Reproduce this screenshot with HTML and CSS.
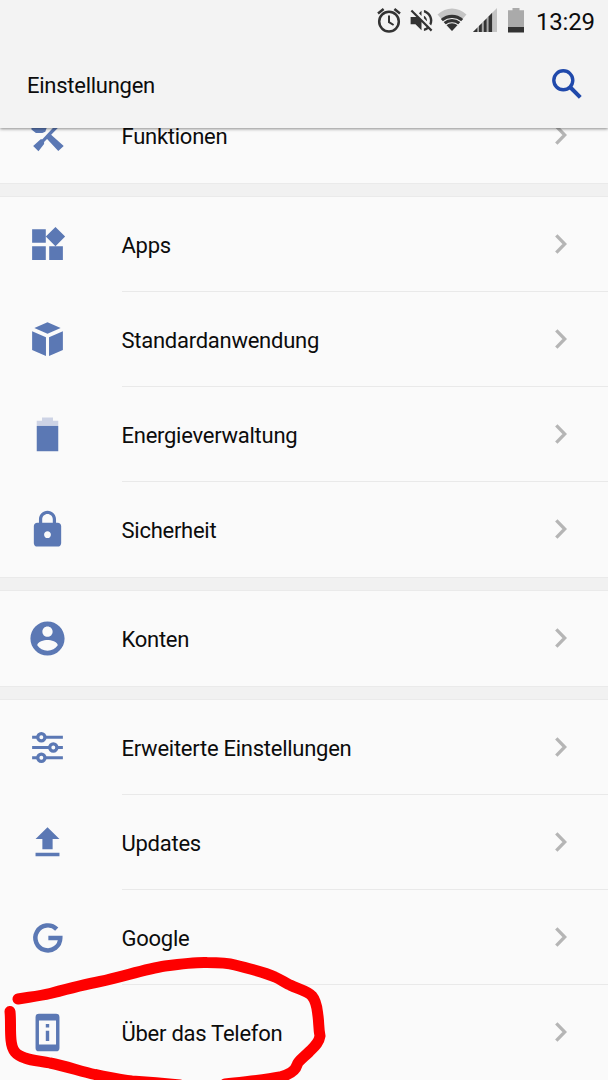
FILE: index.html
```html
<!DOCTYPE html>
<html lang="de">
<head>
    <meta charset="UTF-8">
    <title>Einstellungen</title>
    <link rel="stylesheet" href="styles.css">
</head>
<body>
    <div class="screen">
        <header class="header">
            <div class="status-bar">
                <svg class="alarm" width="24" height="26" viewBox="0 0 24 26">
                    <g fill="none" stroke="#333" stroke-width="2.5">
                        <circle cx="12" cy="13.6" r="9.8"/>
                        <path d="M1 5.400 6.600 1M17.400 1 23 5.400"/>
                        <path d="M12 7.600v6.600l4.600 2.800" stroke-width="2"/>
                    </g>
                </svg>
                <svg class="mute" width="29" height="29" viewBox="0 0 24 24">
                    <path fill="#333" d="M16.5 12c0-1.77-1.02-3.29-2.5-4.03v2.21l2.45 2.45c.03-.2.05-.41.05-.63zm2.5 0c0 .94-.2 1.82-.54 2.64l1.51 1.51C20.63 14.91 21 13.5 21 12c0-4.28-2.99-7.86-7-8.77v2.06c2.89.86 5 3.54 5 6.71zM4.27 3 3 4.27 7.73 9H3v6h4l5 5v-6.73l4.25 4.25c-.67.52-1.42.93-2.25 1.18v2.06c1.38-.31 2.63-.95 3.69-1.81L19.73 21 21 19.73l-9-9L4.27 3zM12 4 9.91 6.09 12 8.18V4z"/>
                </svg>
                <svg class="wifi" width="30" height="23" viewBox="0 0 30 23">
                    <path fill="#c4c4c4" d="M.5 6.600C9-1.400 21-1.400 29.500 6.600L15 23z"/>
                    <path fill="#333" d="M3.800 11C10 5.200 20 5.200 26.200 11L15 23z"/>
                    <path fill="none" stroke="#f3f3f3" stroke-width="1.100" d="M6 13.700c5.500-4.300 12.500-4.300 18 0M8.500 17.100c4-2.900 9-2.900 13 0"/>
                </svg>
                <svg class="signal" width="24" height="24" viewBox="0 0 24 24">
                    <path fill="#c4c4c4" d="M0 24 24 0v24z"/>
                    <path fill="#aaa" d="M0 24 19.500 4.500V24z"/>
                    <path fill="#333" d="M0 24l4.300-4.300V24zM6 18l2.800-2.800V24H6zM10.800 13.200l2.800-2.800V24h-2.800zM15.600 8.400l3.400-3.400V24h-3.400z"/>
                </svg>
                <svg class="battery" width="16" height="25" viewBox="0 0 16 25">
                    <path fill="#aaa" d="M0 2.300h4.500V0h7v2.300H16V19H0z"/>
                    <path fill="#333" d="M0 19h16v5.500H0z"/>
                </svg>
                <span class="clock">13:29</span>
            </div>
            <div class="toolbar">
                <h1>Einstellungen</h1>
                <svg class="search" width="30" height="30" viewBox="0 0 30 30">
                    <g fill="none" stroke="#2049ab">
                        <circle cx="11.300" cy="11.300" r="9.500" stroke-width="3.400"/>
                        <path d="M18.500 18.500 28.300 28.300" stroke-width="4"/>
                    </g>
                </svg>
            </div>
        </header>

        <main class="list">
            <section class="group">
                <div class="row">
                    <svg class="icon" viewBox="0 0 24 24">
                        <path d="M2.600 7.600 5.500 4l6 3.600-.8 2.200-1.700.8H5.200L2.600 8.500zM13.800 11.200l7.700 6.900-3.200 3-6.800-7.300z"/>
                        <path d="M15.700 7h2.900L10 15.800v1.200L6.700 21.200 3.600 18.200 8 14.200h1z"/>
                    </svg>
                    <div class="label">Funktionen</div>
                    <svg class="chevron" viewBox="0 0 12 20"><path d="M1.300 1.300 9.800 10l-8.500 8.700"/></svg>
                </div>
            </section>

            <section class="group">
                <div class="row">
                    <svg class="icon" viewBox="0 0 24 24">
                        <path d="M13 13v8h8v-8h-8zM3 21h8v-8H3v8zM3 3v8h8V3H3zm13.660-1.310L11 7.340 16.660 13l5.660-5.660-5.660-5.650z"/>
                    </svg>
                    <div class="label">Apps</div>
                    <svg class="chevron" viewBox="0 0 12 20"><path d="M1.300 1.300 9.800 10l-8.500 8.700"/></svg>
                </div>
                <div class="row">
                    <svg class="icon" viewBox="0 0 24 24">
                        <path d="M12 1.900 19.700 5.300 12 8.700 4.300 5.300zM3 7.100l8.100 3.600v10.900L3 18.200zM21 7.100l-8.100 3.600v10.900l8.100-3.400z"/>
                    </svg>
                    <div class="label">Standardanwendung</div>
                    <svg class="chevron" viewBox="0 0 12 20"><path d="M1.300 1.300 9.800 10l-8.500 8.700"/></svg>
                </div>
                <div class="row">
                    <svg class="icon" viewBox="0 0 24 24">
                        <path class="faded" d="M5.700 4H8.800V2h6.400v2h3.100v3H5.700z"/>
                        <path d="M5.700 7h12.600v14.800H5.700z"/>
                    </svg>
                    <div class="label">Energieverwaltung</div>
                    <svg class="chevron" viewBox="0 0 12 20"><path d="M1.300 1.300 9.800 10l-8.500 8.700"/></svg>
                </div>
                <div class="row">
                    <svg class="icon" viewBox="0 0 24 24">
                        <path d="M18 8h-1V6c0-2.760-2.240-5-5-5S7 3.240 7 6v2H6c-1.100 0-2 .9-2 2v10c0 1.100.9 2 2 2h12c1.100 0 2-.9 2-2V10c0-1.100-.9-2-2-2zm-6 9c-1.100 0-2-.9-2-2s.9-2 2-2 2 .9 2 2-.9 2-2 2zm3.100-9H8.900V6c0-1.710 1.390-3.100 3.100-3.100s3.100 1.390 3.100 3.100v2z"/>
                    </svg>
                    <div class="label">Sicherheit</div>
                    <svg class="chevron" viewBox="0 0 12 20"><path d="M1.300 1.300 9.800 10l-8.500 8.700"/></svg>
                </div>
            </section>

            <section class="group">
                <div class="row">
                    <svg class="icon" viewBox="0 0 24 24">
                        <path d="M12 2C6.480 2 2 6.480 2 12s4.480 10 10 10 10-4.480 10-10S17.520 2 12 2zm0 3c1.660 0 3 1.340 3 3s-1.340 3-3 3-3-1.340-3-3 1.340-3 3-3zm0 14.200c-2.500 0-4.710-1.280-6-3.220.03-1.990 4-3.080 6-3.080 1.990 0 5.970 1.090 6 3.080-1.290 1.940-3.500 3.220-6 3.220z"/>
                    </svg>
                    <div class="label">Konten</div>
                    <svg class="chevron" viewBox="0 0 12 20"><path d="M1.300 1.300 9.800 10l-8.500 8.700"/></svg>
                </div>
            </section>

            <section class="group">
                <div class="row">
                    <svg class="icon sliders" viewBox="0 0 24 24">
                        <path d="M3 6h18M3 12h18M3 18h18"/>
                        <circle cx="8.400" cy="6" r="2.100"/>
                        <circle cx="15.400" cy="12" r="2.100"/>
                        <circle cx="8.400" cy="18" r="2.100"/>
                    </svg>
                    <div class="label">Erweiterte Einstellungen</div>
                    <svg class="chevron" viewBox="0 0 12 20"><path d="M1.300 1.300 9.800 10l-8.500 8.700"/></svg>
                </div>
                <div class="row">
                    <svg class="icon" viewBox="0 0 24 24">
                        <path d="M9 16h6v-6h4l-7-7-7 7h4zM5 18h14v2H5z"/>
                    </svg>
                    <div class="label">Updates</div>
                    <svg class="chevron" viewBox="0 0 12 20"><path d="M1.300 1.300 9.800 10l-8.500 8.700"/></svg>
                </div>
                <div class="row">
                    <svg class="icon google" viewBox="0 0 24 24">
                        <path d="M17.400 7.100A7.300 7.300 0 1 0 19.500 12.300H12.500"/>
                    </svg>
                    <div class="label">Google</div>
                    <svg class="chevron" viewBox="0 0 12 20"><path d="M1.300 1.300 9.800 10l-8.500 8.700"/></svg>
                </div>
                <div class="row">
                    <svg class="icon" viewBox="0 0 24 24">
                        <path fill-rule="evenodd" d="M7 1h10a2 2 0 0 1 2 2v18a2 2 0 0 1-2 2H7a2 2 0 0 1-2-2V3a2 2 0 0 1 2-2zM7 5v14h10V5zM11 7h2v2h-2zM11 11h2v6h-2z"/>
                    </svg>
                    <div class="label">Über das Telefon</div>
                    <svg class="chevron" viewBox="0 0 12 20"><path d="M1.300 1.300 9.800 10l-8.500 8.700"/></svg>
                </div>
            </section>
        </main>

        <!-- red pen mark around the last entry -->
        <svg class="marker" width="340" height="130" viewBox="0 950 340 130">
            <path d="M18 999C30 997 40 996 50 993.500C67 989 82 985 100 981.500C122 977 145 969 165 966C180 964 195 962 207 962.500C220 962.500 228 963 235 965C250 969 264 972 275 977C281 979.500 285 983 290 985C298 989 308 991 312 996C317 1002 317 1009 318 1016C319 1023 318.500 1029 320 1036C319 1043 314 1047 309 1052C303 1058 298 1061 297 1065C295 1072 288 1075 280 1077C265 1080 250 1081 225 1084"/>
            <path d="M10 1011.500C11 1021 10 1030 11 1040C12 1051 16 1055 25 1058C33 1061 42 1061 50 1063C65 1066 80 1071 95 1074.500C108 1077 122 1080 132 1081C147 1082 160 1083 180 1085"/>
        </svg>
    </div>
</body>
</html>
```

FILE: styles.css
```css
* {
    box-sizing: border-box;
}

body {
    margin: 0;
    font-family: Roboto, sans-serif;
    color: #0c0c0c;
    background: #fafafa;
}

.screen {
    position: relative;
    width: 608px;
    height: 1080px;
    overflow: hidden;
}

.header {
    position: relative;
    z-index: 1;
    height: 128px;
    background: #f3f3f3;
    box-shadow: 0 1px 3px rgba(0, 0, 0, 0.45);
}

.status-bar {
    display: flex;
    align-items: flex-start;
    justify-content: flex-end;
    height: 43px;
    padding: 8px 13px 0 0;
}

.mute {
    margin: -2px 0 0 6px;
}

.wifi {
    margin-left: 1px;
}

.signal {
    margin-left: 6px;
}

.battery {
    margin-left: 11px;
}

.clock {
    width: 59px;
    margin-left: 12px;
    font-size: 24px;
    line-height: 28px;
    letter-spacing: -0.2px;
    white-space: nowrap;
}

.toolbar {
    display: flex;
    align-items: center;
    justify-content: space-between;
    height: 85px;
    padding: 0 26px 0 27px;
}

h1 {
    margin: 0;
    font-size: 22px;
    font-weight: 400;
    letter-spacing: -0.26px;
}

.search {
    margin-top: -3px;
}

.list {
    margin-top: -40px;
    background: #f1f1f1;
}

.group {
    margin-bottom: 14px;
    background: #fafafa;
    box-shadow: 0 0 0 1px #eaeaea;
}

.row {
    display: flex;
    align-items: center;
    height: 95px;
    padding: 0 41px 1px 26.500px;
}

/* divider starts at the label, not at the icon */
.row:not(:last-child) {
    background: linear-gradient(#e9e9e9, #e9e9e9) 122px 94px / 100% 1px no-repeat;
}

.icon {
    width: 41px;
    height: 41px;
    margin-right: 54px;
    fill: #5b78b4;
}

.faded {
    fill: #cdd3e5;
}

.sliders {
    fill: #fafafa;
    stroke: #5b78b4;
    stroke-width: 1.9;
}

.google {
    fill: none;
    stroke: #5b78b4;
    stroke-width: 2.6;
}

.label {
    flex: 1;
    padding-top: 3px;
    font-size: 22px;
    letter-spacing: -0.26px;
}

.chevron {
    width: 12px;
    height: 20px;
    fill: none;
    stroke: #b5b5b5;
    stroke-width: 3.3;
}

.marker {
    position: absolute;
    left: 0;
    bottom: 0;
    z-index: 2;
    fill: none;
    stroke: #fe0000;
    stroke-width: 11;
    stroke-linecap: round;
    stroke-linejoin: round;
}
```
